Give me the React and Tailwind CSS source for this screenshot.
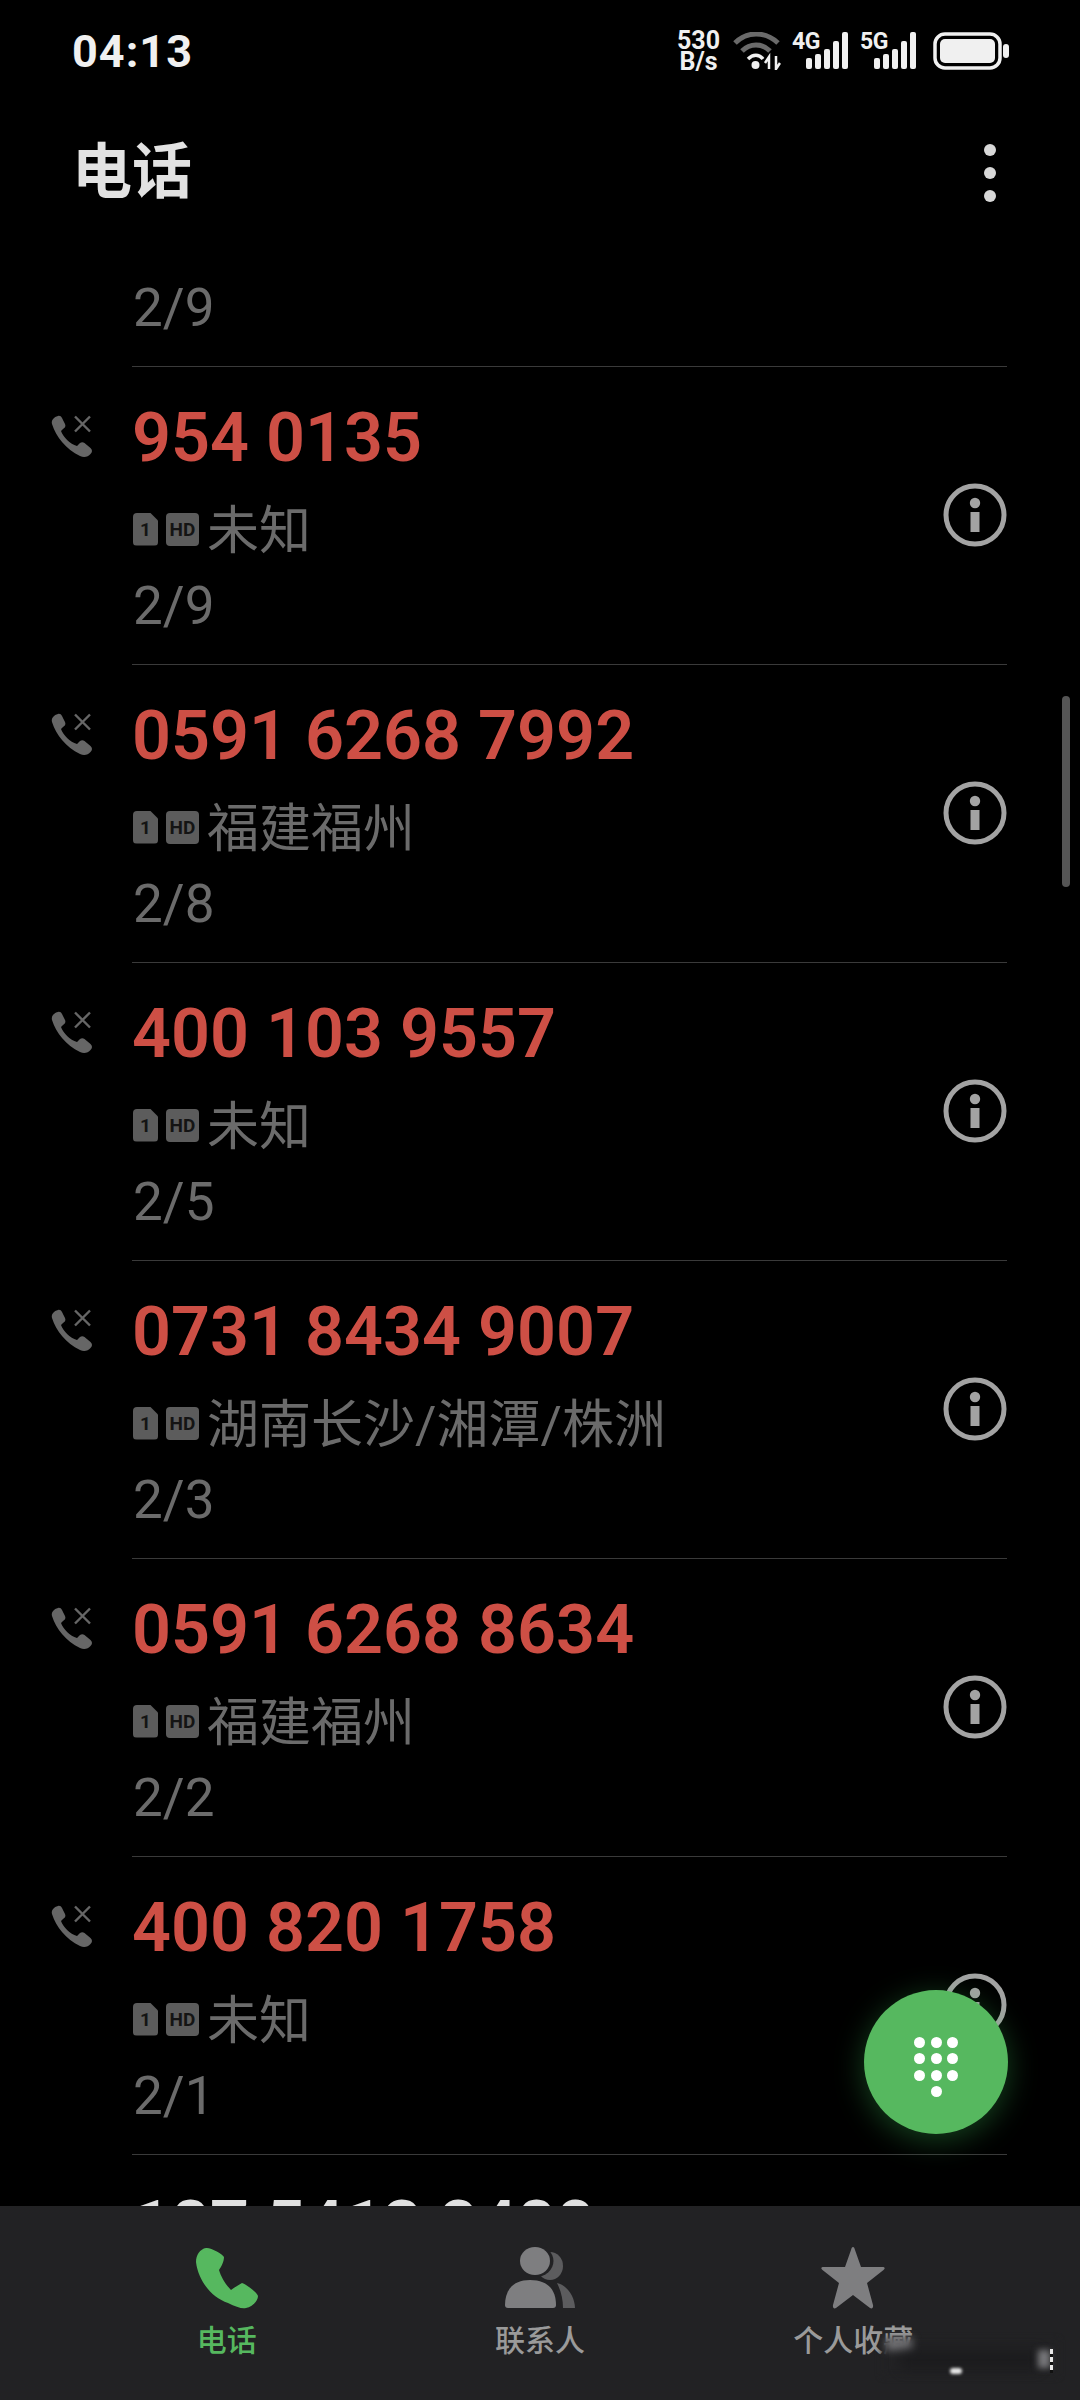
const rows = [
  { num: '954 0135', place: '未知', date: '2/9' },
  { num: '0591 6268 7992', place: '福建福州', date: '2/8' },
  { num: '400 103 9557', place: '未知', date: '2/5' },
  { num: '0731 8434 9007', place: '湖南长沙/湘潭/株洲', date: '2/3' },
  { num: '0591 6268 8634', place: '福建福州', date: '2/2' },
  { num: '400 820 1758', place: '未知', date: '2/1' },
];

function MissedIcon() {
  return (
    <svg width="44" height="44" viewBox="0 0 44 44" className="absolute left-[51px] top-[48px]">
      <path d="M1 9C0 5 3 2 7 1C9 .5 10 1.500 11 3L14 9C15 11 14 13 12 14L10 16C12 22 19 29 26 31L29 28C30.500 27 32 27 33.500 28L39.500 33C41.500 35 41.500 37 39.500 39C37 42 33 43 29 41C15 34 5 22 1 9z" fill="#666" />
      <path d="M24 1.500l15 15M39 1.500L24 16.500" stroke="#666" strokeWidth="2.400" fill="none" />
    </svg>
  );
}

function InfoIcon() {
  return (
    <svg width="64" height="64" viewBox="0 0 64 64" className="absolute left-[943px] top-[116px]">
      <circle cx="32" cy="32" r="29" stroke="#a3a3a3" strokeWidth="5" fill="none" />
      <circle cx="32" cy="20" r="5.200" fill="#a3a3a3" />
      <rect x="27.500" y="29" width="9" height="20" fill="#a3a3a3" />
    </svg>
  );
}

function Badges() {
  return (
    <div className="flex items-center gap-[8px] ml-[1px] mr-[8px] mt-[-6px]">
      <div className="w-[25px] h-[33px] bg-[#5c5c5c] rounded-[4px] [clip-path:polygon(0_0,68%_0,100%_24%,100%_100%,0_100%)] flex items-center justify-center text-[19px] font-bold leading-none text-[#141414] font-['Roboto',sans-serif]">1</div>
      <div className="w-[33px] h-[33px] bg-[#5c5c5c] rounded-[4px] flex items-center justify-center text-[19px] font-bold leading-none text-[#141414] font-['Roboto',sans-serif]">HD</div>
    </div>
  );
}

function Row({ num, place, date }) {
  return (
    <div className="relative h-[298px] shrink-0">
      <MissedIcon />
      <div className="ml-[132px] pt-[31px] flex flex-col">
        <div className="text-[68.300px] leading-[80px] font-semibold text-[#cd4f45] whitespace-nowrap">{num}</div>
        <div className="mt-[24px] h-[60px] flex items-center text-[52px] leading-[60px] text-[#6b6b6b] whitespace-nowrap">
          <Badges />
          <span>{place}</span>
        </div>
        <div className="mt-[14px] ml-[1px] text-[53px] leading-[60px] text-[#6b6b6b]">{date}</div>
      </div>
      <InfoIcon />
      <div className="absolute left-[132px] right-[73px] bottom-0 h-[1px] bg-[#3a3a3a]" />
    </div>
  );
}

function Signal({ label }) {
  return (
    <div className="relative w-[57px] h-[38px] mr-[11px]">
      <span className="absolute left-0 top-[-1px] text-[23px] leading-[22px] font-bold tracking-[-0.5px] text-[#f0f0f0] font-['Roboto',sans-serif]">{label}</span>
      <svg width="57" height="38" viewBox="0 0 57 38" className="absolute left-0 top-0">
        <rect x="14" y="26" width="6" height="11" rx="2" fill="#f0f0f0" />
        <rect x="23" y="22" width="6" height="15" rx="2" fill="#f0f0f0" />
        <rect x="32" y="17" width="6" height="20" rx="2" fill="#f0f0f0" />
        <rect x="41" y="9" width="6" height="28" rx="2" fill="#f0f0f0" />
        <rect x="50" y="0" width="6" height="37" rx="2" fill="#f0f0f0" />
      </svg>
    </div>
  );
}

function StatusIcons() {
  return (
    <div className="flex items-center h-[38px]">
      <div className="flex flex-col items-center text-[25px] leading-[21px] font-bold text-[#f0f0f0] mr-[13px] font-['Roboto',sans-serif]">
        <span>530</span>
        <span>B/s</span>
      </div>
      <svg width="48" height="38" viewBox="0 0 48 38" className="mr-[11px]">
        <path d="M2 11C14 -1 32 -1 45 11" stroke="#6a6a6a" strokeWidth="5" fill="none" />
        <path d="M9 19C17 11 29 11 37 19" stroke="#6a6a6a" strokeWidth="5" fill="none" />
        <path d="M15 27C20 22 26 22 30 27" stroke="#f0f0f0" strokeWidth="3.500" fill="none" />
        <circle cx="22.500" cy="33" r="4" fill="#f0f0f0" />
        <path d="M36 37V25L32 31M43 24V37L47 31" stroke="#f0f0f0" strokeWidth="2.500" fill="none" />
      </svg>
      <Signal label="4G" />
      <Signal label="5G" />
      <svg width="76" height="38" viewBox="0 0 76 38" className="ml-[5px]">
        <rect x="2" y="2" width="65" height="34" rx="10" stroke="#f0f0f0" strokeWidth="3.500" fill="none" />
        <rect x="7" y="7" width="55" height="24" rx="5" fill="#f0f0f0" />
        <rect x="70" y="12" width="6" height="14" rx="3" fill="#f0f0f0" />
      </svg>
    </div>
  );
}

function NavItem({ icon, label, active }) {
  return (
    <div className="flex-1 flex flex-col items-center">
      <div className="h-[62px] flex items-center justify-center">{icon}</div>
      <div className={'mt-[15px] text-[30px] leading-[34px] font-medium whitespace-nowrap ' + (active ? 'text-[#56b85f]' : 'text-[#9a9a9a]')}>{label}</div>
    </div>
  );
}

export default function App() {
  return (
    <div className="relative w-[1080px] h-[2400px] bg-black overflow-hidden flex flex-col font-['Roboto','Noto_Sans_CJK_SC',sans-serif]">
      <div className="h-[100px] pt-[2px] shrink-0 flex items-center justify-between pl-[72px] pr-[71px]">
        <div className="text-[45px] font-bold tracking-[1px] text-[#f0f0f0] leading-none">04:13</div>
        <StatusIcons />
      </div>
      <div className="h-[146px] shrink-0 flex items-center justify-between pl-[72px] pr-[84px]">
        <div className="text-[60px] leading-none font-bold text-[#e2e2e2]">电话</div>
        <div className="flex flex-col gap-[11px]">
          <div className="w-[12px] h-[12px] rounded-full bg-[#d8d8d8]" />
          <div className="w-[12px] h-[12px] rounded-full bg-[#d8d8d8]" />
          <div className="w-[12px] h-[12px] rounded-full bg-[#d8d8d8]" />
        </div>
      </div>
      <div className="flex-1 min-h-0 overflow-hidden flex flex-col">
        <div className="relative h-[121px] shrink-0">
          <div className="ml-[133px] pt-[32px] text-[53px] leading-[60px] text-[#6b6b6b]">2/9</div>
          <div className="absolute left-[132px] right-[73px] bottom-0 h-[1px] bg-[#3a3a3a]" />
        </div>
        {rows.map((r) => <Row key={r.date + r.num} {...r} />)}
        <div className="relative shrink-0 h-[298px]">
          <div className="ml-[132px] pt-[31px] text-[68.300px] leading-[80px] font-semibold text-[#e0e0e0] whitespace-nowrap">187 5413 2480</div>
        </div>
      </div>
      <div className="h-[194px] shrink-0 bg-[#222224] flex px-[70px] pt-[41px]">
        <NavItem active label="电话" icon={
          <svg width="62" height="62" viewBox="0 0 62 62">
            <path d="M10 1C4 2 0 8 0 15C2 32 14 50 32 56C40 60 46 62 50 61C56 60 62 54 62 49C62 47 52 38 46 36C42 38 38 41 35 43C30 38 25 30 23 23C25 20 28 15 28 10C27 7 14 0 10 1z" fill="#56b85f" />
          </svg>
        } />
        <NavItem label="联系人" icon={
          <svg width="70" height="62" viewBox="0 0 70 62">
            <ellipse cx="45" cy="19" rx="13" ry="14" fill="#5c5c5e" />
            <path d="M52 36C62 38 70 50 70 61L58 61C58 52 56 44 52 36z" fill="#5c5c5e" />
            <ellipse cx="31" cy="14" rx="17.500" ry="16" fill="#222224" />
            <ellipse cx="30" cy="14" rx="15" ry="14" fill="#7e7e80" />
            <path d="M0 58C0 44 7 33 25 33C44 33 51 44 51 58C51 60 50 61 48 61H3C1 61 0 60 0 58z" fill="#7e7e80" />
          </svg>
        } />
        <NavItem label="个人收藏" icon={
          <svg width="64" height="62" viewBox="0 0 64 62">
            <path d="M32 0C33 0 33.500 1 34 3L40 20L61 20C64 20 64.500 21.500 62.500 23L46 36L52 58C52.500 61 51 62 49 61L32 48L15 61C13 62 11.500 61 12 58L18 36L1.500 23C-.5 21.500 0 20 3 20L24 20L30 3C30.500 1 31 0 32 0z" fill="#7e7e80" />
          </svg>
        } />
      </div>

      <div className="absolute left-[1062px] top-[696px] w-[8px] h-[191px] rounded-full bg-[#555555]" />

      <div className="absolute left-[864px] top-[1990px] w-[144px] h-[144px] rounded-full bg-[#56b85f] shadow-[0_6px_30px_rgba(60,190,90,0.35)] pt-[10px] grid grid-cols-[repeat(3,16.500px)] auto-rows-[16.500px] content-center justify-center items-center justify-items-center">
        {[0, 1, 2, 3, 4, 5, 6, 7, 8].map((i) => <div key={i} className="w-[11px] h-[11px] rounded-full bg-white" />)}
        <div className="col-start-2 w-[11px] h-[11px] rounded-full bg-white" />
      </div>

      <div className="absolute left-[882px] top-[2340px] w-[176px] h-[36px] bg-[#222224] blur-[3px]" />
      <div className="absolute left-[886px] top-[2338px] w-[26px] h-[12px] bg-[#77777a] blur-[4px]" />
      <div className="absolute left-[900px] top-[2350px] w-[140px] h-[20px] bg-[#19191b] opacity-70 blur-[6px]" />
      <div className="absolute left-[950px] top-[2368px] w-[12px] h-[6px] rounded-full bg-[#e8e8e8] blur-[1.500px]" />
      <div className="absolute left-[1038px] top-[2350px] w-[12px] h-[18px] bg-[#77777a] blur-[3px]" />
      <div className="absolute left-[1050px] top-[2349px] w-[3px] h-[24px] bg-[repeating-linear-gradient(to_bottom,#e8e8e8_0_5px,#111_5px_8px)]" />
    </div>
  );
}
